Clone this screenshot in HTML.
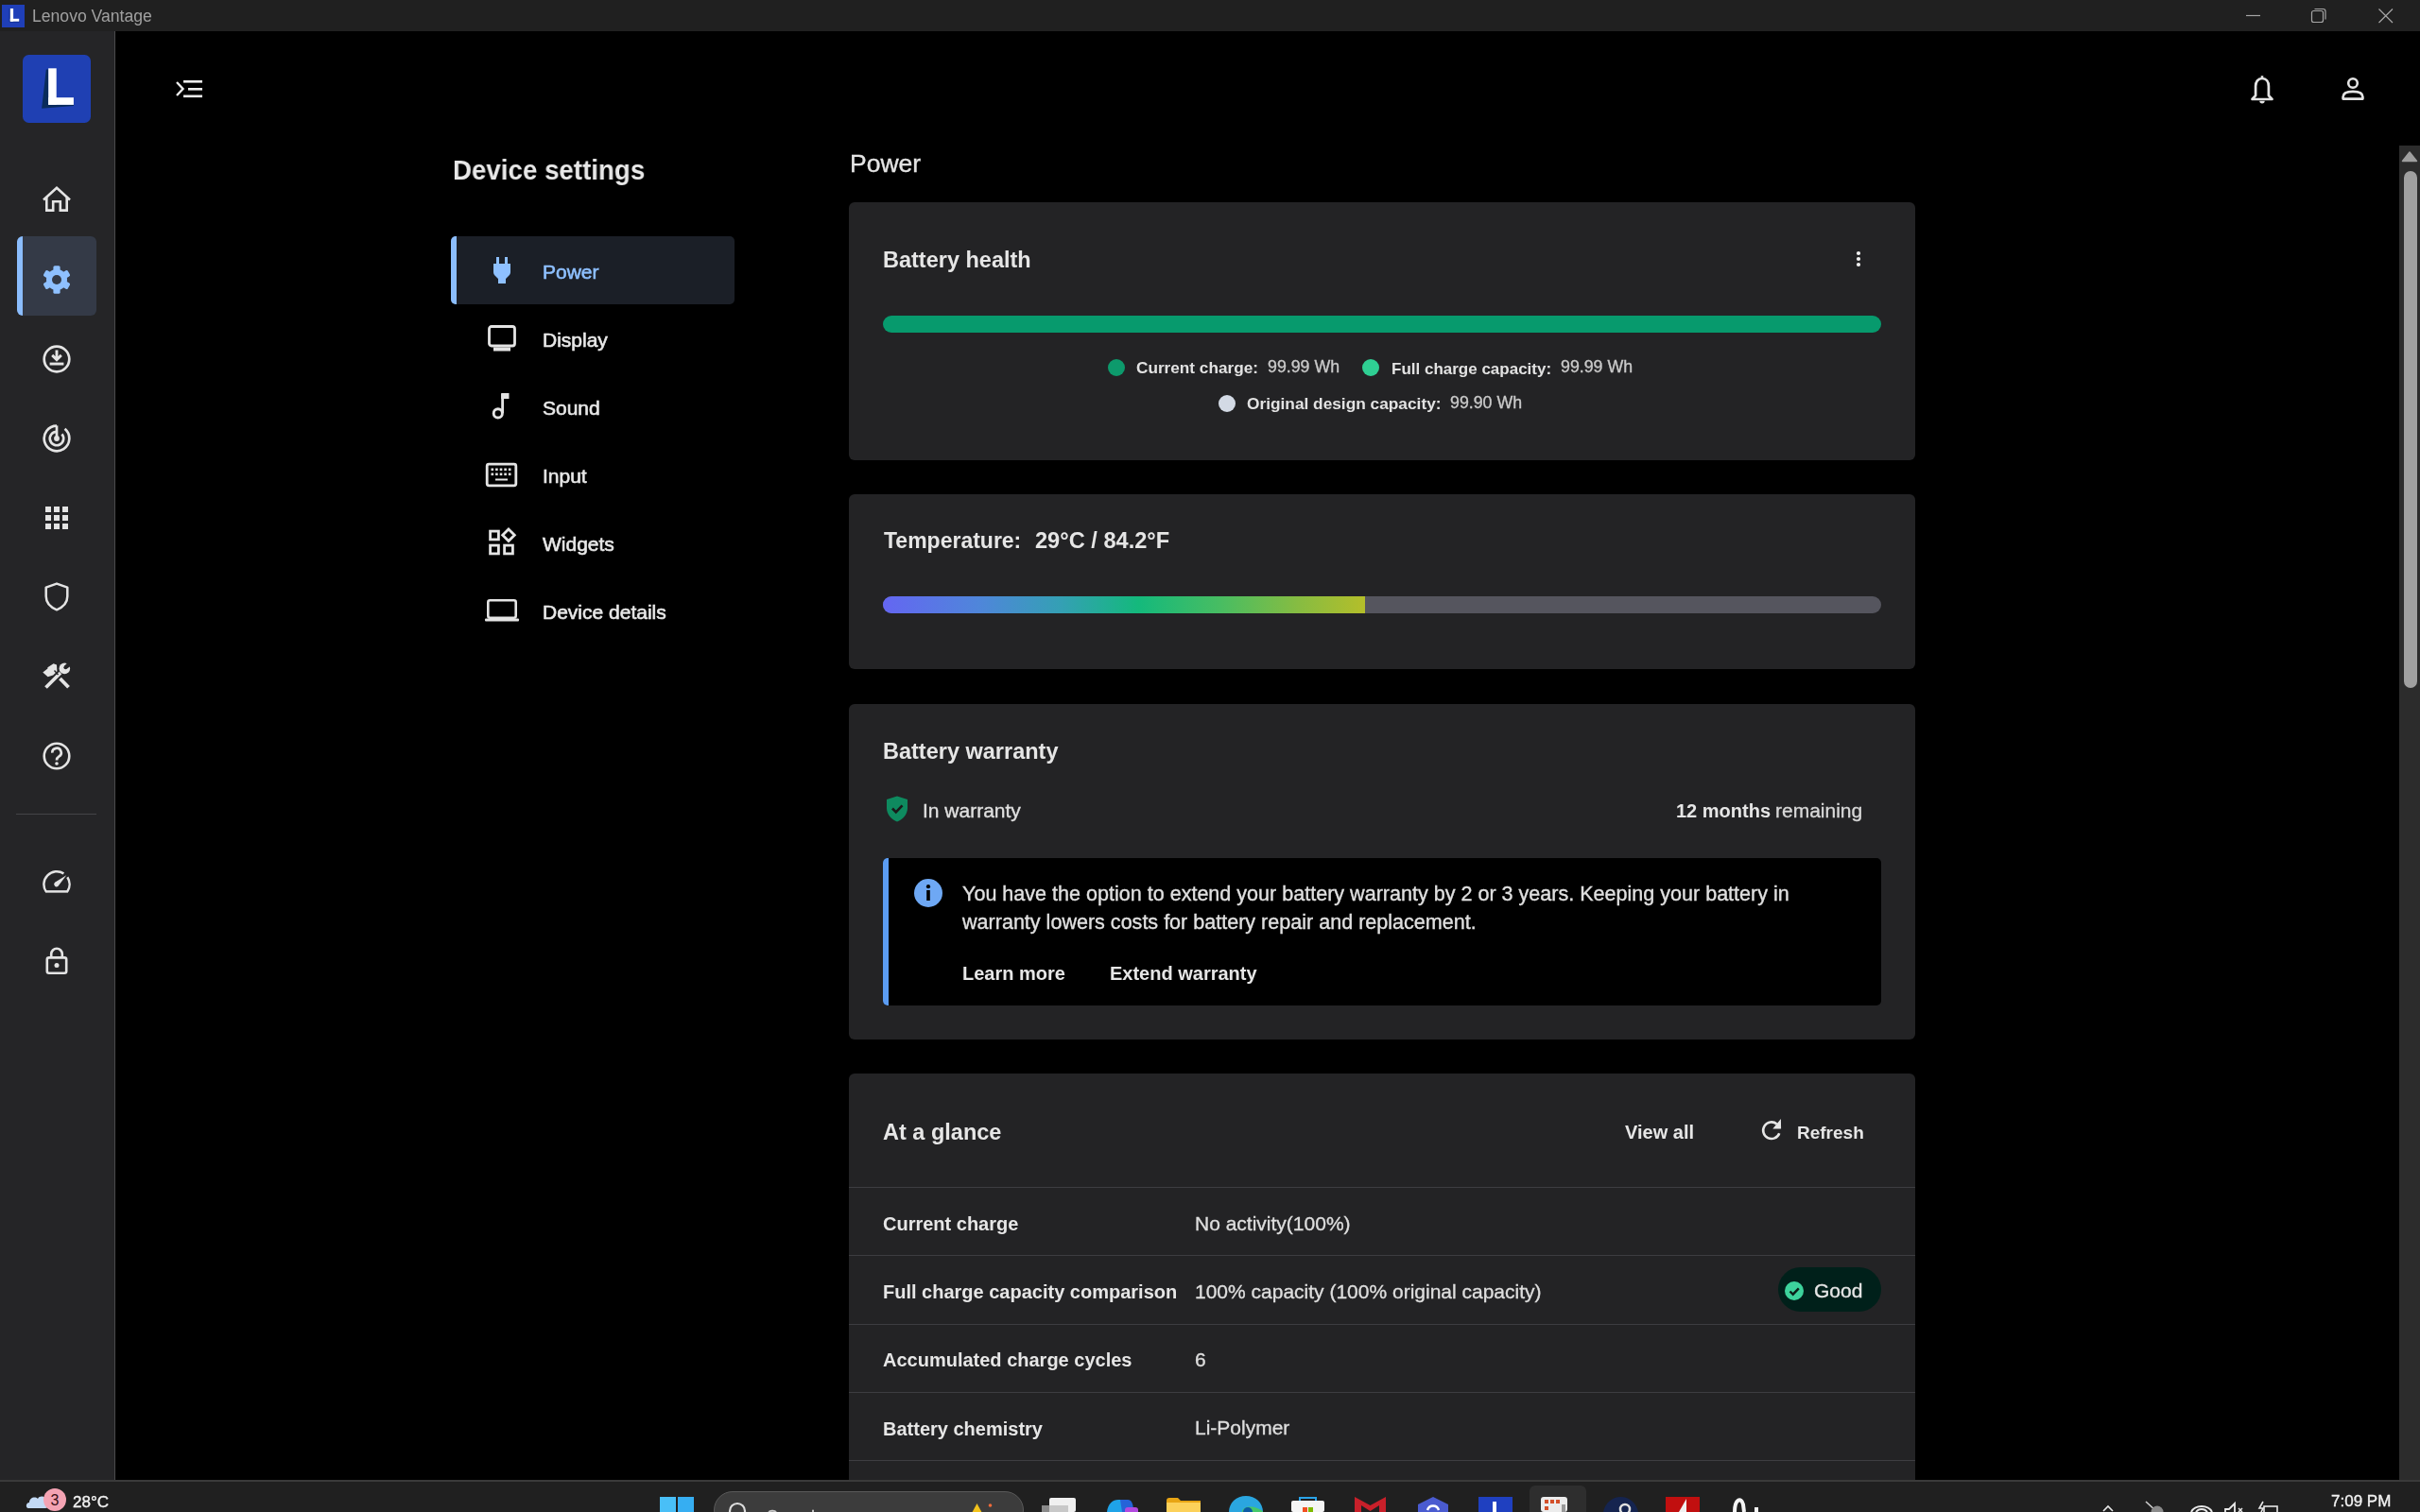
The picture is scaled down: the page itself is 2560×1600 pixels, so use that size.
<!DOCTYPE html>
<html><head><meta charset="utf-8"><style>
html,body{margin:0;padding:0;width:2560px;height:1600px;overflow:hidden;background:#000}
body{position:relative;font-family:"Liberation Sans", sans-serif}
.t{position:absolute;white-space:nowrap;will-change:transform}
svg{display:block}
</style></head><body>
<div style="position:absolute;left:0px;top:0px;width:2560px;height:33px;background:#202020"></div>
<div style="position:absolute;left:0px;top:33px;width:121px;height:1533px;background:#252527"></div>
<div style="position:absolute;left:121px;top:33px;width:1px;height:1533px;background:#4a4a4c"></div>
<div style="position:absolute;left:122px;top:33px;width:2416px;height:1533px;background:#000"></div>
<svg style="position:absolute;left:2px;top:5px" width="24" height="24" viewBox="0 0 24 24"><rect width="24" height="24.3" fill="#1f3fb8"/><path d="M8.2 4 V18 H18.8" fill="none" stroke="#001a60" stroke-width="1" opacity="0.6"/><rect x="8.8" y="4" width="3.3" height="13.7" fill="#fff"/><rect x="8.8" y="14.8" width="9.4" height="2.9" fill="#fff"/></svg>
<div class="t" style="left:34px;top:9.20px;font-size:17.6px;line-height:17.6px;font-weight:400;color:#a0a0a0;-webkit-text-stroke:0.35px #a0a0a0;-webkit-text-stroke-width:0;">Lenovo Vantage</div>
<svg style="position:absolute;left:2370px;top:8px" width="170" height="18" viewBox="0 0 170 18"><line x1="6" y1="8.5" x2="21" y2="8.5" stroke="#a6a6a6" stroke-width="1.2"/><rect x="75.5" y="3.5" width="12" height="12" rx="2" fill="none" stroke="#a6a6a6" stroke-width="1.2"/><path d="M78.5 1.5 H87.5 a2.5 2.5 0 0 1 2.5 2.5 V12.5" fill="none" stroke="#a6a6a6" stroke-width="1.2"/><path d="M146.5 1.5 L161 16 M161 1.5 L146.5 16" stroke="#a6a6a6" stroke-width="1.2"/></svg>
<svg style="position:absolute;left:24px;top:58px" width="72" height="72" viewBox="0 0 72 72"><rect width="72" height="72" rx="6.5" fill="#1f40b3"/><path d="M24.8 15.6 L27.2 15.6 L27.2 52.9 L54 52.9 L54 54 L20.1 56.8 Z" fill="#0a2c5c"/><rect x="27.2" y="14.3" width="8.5" height="38.6" fill="#fff"/><rect x="27.2" y="45.2" width="26.7" height="7.7" fill="#fff"/></svg>
<svg style="position:absolute;left:184px;top:83px" width="34" height="24" viewBox="0 0 34 24"><path d="M3 4 L9.5 11 L3 18" fill="none" stroke="#eee" stroke-width="2.4"/><rect x="10" y="2" width="20" height="2.6" fill="#eee"/><rect x="15" y="10" width="15" height="2.6" fill="#eee"/><rect x="10" y="17.5" width="20" height="2.6" fill="#eee"/></svg>
<svg style="position:absolute;left:2379px;top:78px" width="28" height="34" viewBox="0 0 28 34"><path d="M14 5 c-4.4 0 -6.9 3.4 -6.9 8.3 v9.8 l-3.6 3.9 h21 l-3.6 -3.9 v-9.8 c0 -4.9 -2.5 -8.3 -6.9 -8.3z" fill="none" stroke="#e4e4e4" stroke-width="2.7" stroke-linejoin="round"/><path d="M14 2.2 v3" stroke="#e4e4e4" stroke-width="2.6"/><path d="M11.3 28.8 a2.7 2.7 0 0 0 5.4 0z" fill="#e4e4e4"/></svg>
<svg style="position:absolute;left:2475px;top:80px" width="28" height="28" viewBox="0 0 28 28"><circle cx="14" cy="8" r="4.8" fill="none" stroke="#e4e4e4" stroke-width="2.6"/><path d="M3.6 24.6 v-2.2 c0 -3.5 4 -5.6 10.4 -5.6 s10.4 2.1 10.4 5.6 v2.2 z" fill="none" stroke="#e4e4e4" stroke-width="2.7" stroke-linejoin="round"/></svg>
<div style="position:absolute;left:2538px;top:154px;width:22px;height:1412px;background:#2c2c2c"></div>
<svg style="position:absolute;left:2538px;top:154px" width="22" height="22" viewBox="0 0 22 22"><path d="M11 7 L18.5 16.5 H3.5 Z" fill="#9f9f9f" stroke="#9f9f9f" stroke-width="1.5" stroke-linejoin="round"/></svg>
<div style="position:absolute;left:2543px;top:181px;width:14px;height:547px;background:#a0a0a0;border-radius:7px"></div>
<svg style="position:absolute;left:44px;top:196px" width="32" height="30" viewBox="0 0 32 30"><path d="M2 15.5 L16 2.8 L30 15.5" fill="none" stroke="#e4e4e4" stroke-width="2.6"/><path d="M5.3 12.8 V26.6 H12.2 V17.3 H19.8 V26.6 H26.7 V12.8" fill="none" stroke="#e4e4e4" stroke-width="2.6" stroke-linejoin="miter"/></svg>
<div style="position:absolute;left:18px;top:250px;width:84px;height:84px;background:#343a47;border-radius:6px"></div>
<div style="position:absolute;left:18px;top:250px;width:6px;height:84px;background:#8bbdfd;border-radius:6px 0 0 6px"></div>
<svg style="position:absolute;left:45px;top:281px" width="30" height="30" viewBox="0 0 30 30"><g transform="translate(15,15)" fill="#8ec0ff"><rect x="-3.6" y="-14.8" width="7.2" height="8" rx="1.6" transform="rotate(0)"/><rect x="-3.6" y="-14.8" width="7.2" height="8" rx="1.6" transform="rotate(60)"/><rect x="-3.6" y="-14.8" width="7.2" height="8" rx="1.6" transform="rotate(120)"/><rect x="-3.6" y="-14.8" width="7.2" height="8" rx="1.6" transform="rotate(180)"/><rect x="-3.6" y="-14.8" width="7.2" height="8" rx="1.6" transform="rotate(240)"/><rect x="-3.6" y="-14.8" width="7.2" height="8" rx="1.6" transform="rotate(300)"/><circle r="11"/><circle r="5" fill="#343a47"/></g></svg>
<svg style="position:absolute;left:45px;top:365px" width="30" height="30" viewBox="0 0 30 30"><circle cx="15" cy="15" r="13.3" fill="none" stroke="#e4e4e4" stroke-width="2.7"/><path d="M15 5.5 V15.5 M10.2 10.9 L15 15.7 L19.8 10.9" fill="none" stroke="#e4e4e4" stroke-width="2.9"/><rect x="7.6" y="18.6" width="14.8" height="2.9" fill="#e4e4e4"/></svg>
<svg style="position:absolute;left:45px;top:449px" width="30" height="30" viewBox="0 0 30 30"><path d="M15 1.7 A13.3 13.3 0 1 0 23.55 4.81" fill="none" stroke="#e4e4e4" stroke-width="2.7"/><path d="M15 7.8 A7.2 7.2 0 1 0 20.5 10.37" fill="none" stroke="#e4e4e4" stroke-width="2.7"/><path d="M15 1.4 V14" stroke="#e4e4e4" stroke-width="2.7"/><circle cx="15" cy="15" r="2.9" fill="#e4e4e4"/></svg>
<svg style="position:absolute;left:48px;top:536px" width="24" height="24" viewBox="0 0 24 24"><rect x="0" y="0" width="6" height="6" fill="#e4e4e4"/><rect x="9" y="0" width="6" height="6" fill="#e4e4e4"/><rect x="18" y="0" width="6" height="6" fill="#e4e4e4"/><rect x="0" y="9" width="6" height="6" fill="#e4e4e4"/><rect x="9" y="9" width="6" height="6" fill="#e4e4e4"/><rect x="18" y="9" width="6" height="6" fill="#e4e4e4"/><rect x="0" y="18" width="6" height="6" fill="#e4e4e4"/><rect x="9" y="18" width="6" height="6" fill="#e4e4e4"/><rect x="18" y="18" width="6" height="6" fill="#e4e4e4"/></svg>
<svg style="position:absolute;left:45px;top:616px" width="30" height="31" viewBox="0 0 30 31"><path d="M15 1.6 L26.3 5.6 V15 C26.3 22 21 26.8 15 29.3 C9 26.8 3.7 22 3.7 15 V5.6 Z" fill="none" stroke="#e4e4e4" stroke-width="2.5" stroke-linejoin="round"/></svg>
<svg style="position:absolute;left:40px;top:695px" width="40" height="40" viewBox="0 0 40 40"><path d="M8.5 32.5 L24 17" stroke="#e4e4e4" stroke-width="3.8"/><path d="M23.5 23 L32.5 32.3" stroke="#e4e4e4" stroke-width="3.8"/><circle cx="28.3" cy="12.4" r="5.8" fill="#e4e4e4"/><circle cx="29.4" cy="11.2" r="2" fill="#252527"/><path d="M28 9.8 L32 5.8 L35.5 9.3 L31 12.6 Z" fill="#252527"/><path d="M5.3 16.6 L10.4 12.6 L10.4 11.2 L16.6 7.2 L20 8.6 L20.4 15.4 L16.2 19.6 L10.6 21.2 Z" fill="#e4e4e4"/><path d="M17.5 14.5 L21.5 19" stroke="#252527" stroke-width="1.4"/></svg>
<svg style="position:absolute;left:45px;top:785px" width="30" height="30" viewBox="0 0 30 30"><circle cx="15" cy="15" r="13.3" fill="none" stroke="#e4e4e4" stroke-width="2.6"/><path d="M10.3 11.6 A4.7 4.7 0 1 1 17.2 15.6 C15.6 16.6 15 17.2 15 19.4" fill="none" stroke="#e4e4e4" stroke-width="2.7"/><circle cx="15" cy="23" r="1.8" fill="#e4e4e4"/></svg>
<div style="position:absolute;left:17px;top:861px;width:85px;height:1px;background:#444448"></div>
<svg style="position:absolute;left:45px;top:919px" width="30" height="28" viewBox="0 0 30 28"><path d="M3.72 24.4 A13.6 13.6 0 0 1 22.4 5.4 M26.3 9.25 A13.6 13.6 0 0 1 26.28 24.4" fill="none" stroke="#e4e4e4" stroke-width="2.5"/><path d="M3 24.4 H27" stroke="#e4e4e4" stroke-width="2.5"/><path d="M16.49 18.63 L25.2 7.3 L13.01 14.77 A2.6 2.6 0 0 0 16.49 18.63 Z" fill="#e4e4e4"/></svg>
<svg style="position:absolute;left:45px;top:1000px" width="30" height="32" viewBox="0 0 30 32"><path d="M9.2 13.5 V9.6 A5.8 5.8 0 0 1 20.8 9.6 V13.5" fill="none" stroke="#e4e4e4" stroke-width="2.6"/><rect x="4.8" y="13.4" width="20.4" height="16.4" rx="2" fill="none" stroke="#e4e4e4" stroke-width="2.6"/><circle cx="15" cy="21.6" r="2.5" fill="#e4e4e4"/></svg>
<div class="t" style="left:478.5px;top:164.95px;font-size:29.6px;line-height:29.6px;font-weight:700;color:#e8e8e8;transform:scaleX(0.936);transform-origin:0 0;">Device settings</div>
<div style="position:absolute;left:477px;top:250px;width:300px;height:71.5px;background:#1b1f27;border-radius:5px"></div>
<div style="position:absolute;left:477px;top:250px;width:6px;height:71.5px;background:#8bbdfd;border-radius:5px 0 0 5px"></div>
<div class="t" style="left:574px;top:276.63px;font-size:21px;line-height:21px;font-weight:400;color:#8ec0ff;-webkit-text-stroke:0.35px #8ec0ff;-webkit-text-stroke-width:0.6px;">Power</div>
<div class="t" style="left:574px;top:348.63px;font-size:21px;line-height:21px;font-weight:400;color:#e8e8e8;-webkit-text-stroke:0.35px #e8e8e8;-webkit-text-stroke-width:0.6px;">Display</div>
<div class="t" style="left:574px;top:420.63px;font-size:21px;line-height:21px;font-weight:400;color:#e8e8e8;-webkit-text-stroke:0.35px #e8e8e8;-webkit-text-stroke-width:0.6px;">Sound</div>
<div class="t" style="left:574px;top:492.63px;font-size:21px;line-height:21px;font-weight:400;color:#e8e8e8;-webkit-text-stroke:0.35px #e8e8e8;-webkit-text-stroke-width:0.6px;">Input</div>
<div class="t" style="left:574px;top:564.63px;font-size:21px;line-height:21px;font-weight:400;color:#e8e8e8;-webkit-text-stroke:0.35px #e8e8e8;-webkit-text-stroke-width:0.6px;">Widgets</div>
<div class="t" style="left:574px;top:636.63px;font-size:21px;line-height:21px;font-weight:400;color:#e8e8e8;-webkit-text-stroke:0.35px #e8e8e8;-webkit-text-stroke-width:0.6px;">Device details</div>
<svg style="position:absolute;left:520px;top:270px" width="22" height="32" viewBox="0 0 22 32"><rect x="5" y="2" width="3" height="8" fill="#8ec0ff"/><rect x="14" y="2" width="3" height="8" fill="#8ec0ff"/><path d="M2 9 H20 V18 C20 20 19 21 17.5 22.5 L15 25 V30 H7 V25 L4.5 22.5 C3 21 2 20 2 18 Z" fill="#8ec0ff"/></svg>
<svg style="position:absolute;left:515px;top:343px" width="32" height="30" viewBox="0 0 32 30"><rect x="2.5" y="2.5" width="27" height="20.5" rx="2.5" fill="none" stroke="#e4e4e4" stroke-width="2.8"/><rect x="7" y="24.5" width="18" height="4" fill="#e4e4e4"/></svg>
<svg style="position:absolute;left:520px;top:414px" width="22" height="32" viewBox="0 0 22 32"><circle cx="6.8" cy="23.4" r="4.6" fill="none" stroke="#e4e4e4" stroke-width="2.9"/><path d="M11.6 23 V3" stroke="#e4e4e4" stroke-width="2.8"/><rect x="10.2" y="2" width="8.3" height="6" fill="#e4e4e4"/></svg>
<svg style="position:absolute;left:513px;top:489px" width="35" height="27" viewBox="0 0 35 27"><rect x="2.2" y="2.2" width="30.6" height="22.6" rx="2" fill="none" stroke="#e4e4e4" stroke-width="2.8"/><rect x="6.5" y="6.5" width="2.6" height="2.6" fill="#e4e4e4"/><rect x="6.5" y="11.5" width="2.6" height="2.6" fill="#e4e4e4"/><rect x="11.1" y="6.5" width="2.6" height="2.6" fill="#e4e4e4"/><rect x="11.1" y="11.5" width="2.6" height="2.6" fill="#e4e4e4"/><rect x="15.7" y="6.5" width="2.6" height="2.6" fill="#e4e4e4"/><rect x="15.7" y="11.5" width="2.6" height="2.6" fill="#e4e4e4"/><rect x="20.3" y="6.5" width="2.6" height="2.6" fill="#e4e4e4"/><rect x="20.3" y="11.5" width="2.6" height="2.6" fill="#e4e4e4"/><rect x="24.9" y="6.5" width="2.6" height="2.6" fill="#e4e4e4"/><rect x="24.9" y="11.5" width="2.6" height="2.6" fill="#e4e4e4"/><rect x="11" y="17.5" width="13" height="2" fill="#e4e4e4"/></svg>
<svg style="position:absolute;left:516px;top:558px" width="32" height="31" viewBox="0 0 32 31"><rect x="2.6" y="4.1" width="8.8" height="8.8" fill="none" stroke="#e4e4e4" stroke-width="2.8"/><rect x="2.6" y="19.1" width="8.8" height="8.8" fill="none" stroke="#e4e4e4" stroke-width="2.8"/><rect x="17.6" y="19.1" width="8.8" height="8.8" fill="none" stroke="#e4e4e4" stroke-width="2.8"/><path d="M22 2 L28.3 8.3 L22 14.6 L15.7 8.3 Z" fill="none" stroke="#e4e4e4" stroke-width="2.8" stroke-linejoin="miter"/></svg>
<svg style="position:absolute;left:512px;top:633px" width="38" height="26" viewBox="0 0 38 26"><rect x="4.3" y="2.3" width="29.4" height="18.5" rx="2" fill="none" stroke="#e4e4e4" stroke-width="2.6"/><rect x="1" y="21.5" width="36" height="3" rx="1" fill="#e4e4e4"/></svg>
<div class="t" style="left:898.6px;top:159.97px;font-size:26.5px;line-height:26.5px;font-weight:400;color:#e4e4e4;-webkit-text-stroke:0.35px #e4e4e4;">Power</div>
<div style="position:absolute;left:898px;top:214px;width:1128px;height:273px;background:#232325;border-radius:6px"></div>
<div class="t" style="left:934px;top:264.11px;font-size:23.5px;line-height:23.5px;font-weight:700;color:#e6e6e6;">Battery health</div>
<svg style="position:absolute;left:1962px;top:264px" width="8" height="20" viewBox="0 0 8 20"><circle cx="4" cy="4" r="2.1" fill="#f0f0f0"/><circle cx="4" cy="10" r="2.1" fill="#f0f0f0"/><circle cx="4" cy="16" r="2.1" fill="#f0f0f0"/></svg>
<div style="position:absolute;left:934px;top:334px;width:1056px;height:18px;background:#079a6d;border-radius:9px"></div>
<div style="position:absolute;left:1172px;top:380px;width:18px;height:18px;background:#0d9a6c;border-radius:50%"></div>
<div style="position:absolute;left:1441px;top:380px;width:18px;height:18px;background:#2fcf93;border-radius:50%"></div>
<div style="position:absolute;left:1289px;top:418px;width:18px;height:18px;background:#d3dae5;border-radius:50%"></div>
<div class="t" style="left:1202px;top:381.44px;font-size:17.2px;line-height:17.2px;font-weight:700;color:#e2e2e2;">Current charge:</div>
<div class="t" style="left:1340.5px;top:380.33px;font-size:17.8px;line-height:17.8px;font-weight:400;color:#c9c9c9;-webkit-text-stroke:0.35px #c9c9c9;">99.99 Wh</div>
<div class="t" style="left:1472px;top:381.61px;font-size:17.0px;line-height:17.0px;font-weight:700;color:#e2e2e2;">Full charge capacity:</div>
<div class="t" style="left:1651px;top:380.33px;font-size:17.8px;line-height:17.8px;font-weight:400;color:#c9c9c9;-webkit-text-stroke:0.35px #c9c9c9;">99.99 Wh</div>
<div class="t" style="left:1318.7px;top:419.36px;font-size:17.3px;line-height:17.3px;font-weight:700;color:#e2e2e2;">Original design capacity:</div>
<div class="t" style="left:1534px;top:418.33px;font-size:17.8px;line-height:17.8px;font-weight:400;color:#c9c9c9;-webkit-text-stroke:0.35px #c9c9c9;">99.90 Wh</div>
<div style="position:absolute;left:898px;top:523px;width:1128px;height:185px;background:#232325;border-radius:6px"></div>
<div class="t" style="left:934.5px;top:561.03px;font-size:23px;line-height:23px;font-weight:700;color:#e6e6e6;">Temperature:</div>
<div class="t" style="left:1094.5px;top:560.52px;font-size:23.6px;line-height:23.6px;font-weight:700;color:#e6e6e6;">29°C / 84.2°F</div>
<div style="position:absolute;left:934px;top:631px;width:1056px;height:18px;background:#55555e;border-radius:9px"></div>
<div style="position:absolute;left:934px;top:631px;width:510px;height:18px;background:linear-gradient(90deg,#6466f2 0%,#4f86da 20%,#34a0b4 37%,#14b97c 53%,#48bd62 70%,#86bc42 86%,#b4be2a 100%);border-radius:9px 0 0 9px"></div>
<div style="position:absolute;left:898px;top:745px;width:1128px;height:355px;background:#232325;border-radius:6px"></div>
<div class="t" style="left:934.3px;top:784.11px;font-size:23.5px;line-height:23.5px;font-weight:700;color:#e6e6e6;">Battery warranty</div>
<svg style="position:absolute;left:936px;top:841px" width="26" height="30" viewBox="0 0 26 30"><path d="M13 1.5 L24 5 V14 C24 21 19 26 13 28.5 C7 26 2 21 2 14 V5 Z" fill="#0e8a5f"/><path d="M8 14.5 L11.8 18.3 L18.5 11.3" fill="none" stroke="#1a1a1a" stroke-width="2.6"/></svg>
<div class="t" style="left:976px;top:846.63px;font-size:21px;line-height:21px;font-weight:400;color:#e0e0e0;-webkit-text-stroke:0.35px #e0e0e0;">In warranty</div>
<div class="t" style="left:1772.7px;top:848.07px;font-size:20px;line-height:20px;font-weight:700;color:#e6e6e6;">12 months</div>
<div class="t" style="left:1878px;top:846.63px;font-size:21px;line-height:21px;font-weight:400;color:#d8d8d8;-webkit-text-stroke:0.35px #d8d8d8;">remaining</div>
<div style="position:absolute;left:934px;top:908px;width:1056px;height:156px;background:#000;border-radius:5px"></div>
<div style="position:absolute;left:934px;top:908px;width:6px;height:156px;background:#5b9cf2;border-radius:5px 0 0 5px"></div>
<svg style="position:absolute;left:967px;top:930px" width="30" height="30" viewBox="0 0 30 30"><circle cx="15" cy="15" r="15" fill="#6ea8f4"/><rect x="13.2" y="12" width="3.6" height="11" fill="#000"/><circle cx="15" cy="8.2" r="2.1" fill="#000"/></svg>
<div class="t" style="left:1018.3px;top:934.56px;font-size:21.55px;line-height:21.55px;font-weight:400;color:#e0e0e0;-webkit-text-stroke:0.35px #e0e0e0;">You have the option to extend your battery warranty by 2 or 3 years. Keeping your battery in</div>
<div class="t" style="left:1018.3px;top:964.66px;font-size:21.55px;line-height:21.55px;font-weight:400;color:#e0e0e0;-webkit-text-stroke:0.35px #e0e0e0;">warranty lowers costs for battery repair and replacement.</div>
<div class="t" style="left:1018.3px;top:1020.47px;font-size:20px;line-height:20px;font-weight:700;color:#e6e6e6;">Learn more</div>
<div class="t" style="left:1174px;top:1020.47px;font-size:20px;line-height:20px;font-weight:700;color:#e6e6e6;">Extend warranty</div>
<div style="position:absolute;left:898px;top:1136px;width:1128px;height:500px;background:#232325;border-radius:6px 6px 0 0"></div>
<div class="t" style="left:934px;top:1187.41px;font-size:23.5px;line-height:23.5px;font-weight:700;color:#e6e6e6;">At a glance</div>
<div class="t" style="left:1719.4px;top:1188.07px;font-size:20px;line-height:20px;font-weight:700;color:#e6e6e6;">View all</div>
<svg style="position:absolute;left:1862px;top:1182px" width="24" height="26" viewBox="0 0 24 26"><path d="M20.27 17.21 A8.8 8.8 0 1 1 17.66 7.46" fill="none" stroke="#e6e6e6" stroke-width="2.6"/><path d="M21.9 2 L22.1 12.6 L13.3 12.6 Z" fill="#e6e6e6"/></svg>
<div class="t" style="left:1901px;top:1188.92px;font-size:19px;line-height:19px;font-weight:700;color:#e6e6e6;">Refresh</div>
<div style="position:absolute;left:898px;top:1256px;width:1128px;height:1px;background:#3d3d41"></div>
<div style="position:absolute;left:898px;top:1328px;width:1128px;height:1px;background:#3d3d41"></div>
<div style="position:absolute;left:898px;top:1401px;width:1128px;height:1px;background:#3d3d41"></div>
<div style="position:absolute;left:898px;top:1473px;width:1128px;height:1px;background:#3d3d41"></div>
<div style="position:absolute;left:898px;top:1545px;width:1128px;height:1px;background:#3d3d41"></div>
<div class="t" style="left:934px;top:1285.07px;font-size:20px;line-height:20px;font-weight:700;color:#e6e6e6;">Current charge</div>
<div class="t" style="left:1264px;top:1283.63px;font-size:21px;line-height:21px;font-weight:400;color:#dedede;-webkit-text-stroke:0.35px #dedede;">No activity(100%)</div>
<div class="t" style="left:934px;top:1357.07px;font-size:20px;line-height:20px;font-weight:700;color:#e6e6e6;">Full charge capacity comparison</div>
<div class="t" style="left:1264px;top:1355.63px;font-size:21px;line-height:21px;font-weight:400;color:#dedede;-webkit-text-stroke:0.35px #dedede;">100% capacity (100% original capacity)</div>
<div class="t" style="left:934px;top:1429.07px;font-size:20px;line-height:20px;font-weight:700;color:#e6e6e6;">Accumulated charge cycles</div>
<div class="t" style="left:1264px;top:1427.63px;font-size:21px;line-height:21px;font-weight:400;color:#dedede;-webkit-text-stroke:0.35px #dedede;">6</div>
<div class="t" style="left:934px;top:1501.57px;font-size:20px;line-height:20px;font-weight:700;color:#e6e6e6;">Battery chemistry</div>
<div class="t" style="left:1264px;top:1500.13px;font-size:21px;line-height:21px;font-weight:400;color:#dedede;-webkit-text-stroke:0.35px #dedede;">Li-Polymer</div>
<div style="position:absolute;left:1880.5px;top:1341px;width:109.5px;height:47px;background:#00201a;border-radius:24px"></div>
<svg style="position:absolute;left:1888px;top:1355.5px" width="20" height="20" viewBox="0 0 20 20"><circle cx="10" cy="10" r="10" fill="#3dd39c"/><path d="M5.5 10.5 L8.7 13.7 L14.8 7.3" fill="none" stroke="#0b1f18" stroke-width="2.4"/></svg>
<div class="t" style="left:1918.5px;top:1354.83px;font-size:21px;line-height:21px;font-weight:400;color:#e6e6e6;-webkit-text-stroke:0.35px #e6e6e6;">Good</div>
<div style="position:absolute;left:0px;top:1566px;width:2560px;height:34px;background:#202020"></div>
<div style="position:absolute;left:0px;top:1566px;width:2560px;height:2px;background:#3a3a3a"></div>
<svg style="position:absolute;left:26px;top:1574px" width="50" height="26" viewBox="0 0 50 26"><path d="M4 22 C1 22 1 16 5 16 C5 11 11 9 14 12 C16 8 23 9 23 15 C26 15 26 22 22 22 Z" fill="#c3daf5"/><circle cx="32" cy="13" r="12" fill="#f4a3b3"/><text x="32" y="19" text-anchor="middle" font-family="Liberation Sans" font-size="16" fill="#3a1015">3</text></svg>
<div class="t" style="left:77px;top:1580.51px;font-size:17px;line-height:17px;font-weight:400;color:#f2f2f2;-webkit-text-stroke:0.35px #f2f2f2;">28°C</div>
<svg style="position:absolute;left:698px;top:1584px" width="36" height="16" viewBox="0 0 36 16"><rect x="0" y="0" width="17" height="17" fill="#49bff7"/><rect x="19" y="0" width="17" height="17" fill="#36aef2"/></svg>
<div style="position:absolute;left:754.5px;top:1578px;width:328px;height:40px;background:#3c3c3c;border:1.5px solid #5a5a5a;border-radius:22px;box-sizing:border-box"></div>
<svg style="position:absolute;left:770px;top:1589px" width="24" height="12" viewBox="0 0 24 12"><circle cx="10" cy="10" r="8" fill="none" stroke="#dcdcdc" stroke-width="2.2"/></svg>
<div class="t" style="left:811px;top:1596.16px;font-size:18px;line-height:18px;font-weight:400;color:#d0d0d0;-webkit-text-stroke:0.35px #d0d0d0;">Search</div>
<svg style="position:absolute;left:1024px;top:1588px" width="30" height="12" viewBox="0 0 30 12"><path d="M9.5 3 L15.5 14 H3.5 Z" fill="#f2c21b"/><circle cx="23.5" cy="5" r="1.8" fill="#f36b3a"/></svg>
<svg style="position:absolute;left:1102px;top:1585px" width="36" height="15" viewBox="0 0 36 15"><rect x="0" y="8" width="10" height="7" fill="#8a8a8a"/><rect x="8" y="0" width="28" height="15" rx="2" fill="#f0f0f0"/><rect x="8" y="8" width="20" height="7" fill="#c8c8c8"/></svg>
<svg style="position:absolute;left:1169px;top:1587px" width="35" height="13" viewBox="0 0 35 13"><path d="M2 13 C3 4 8 0 14 0 H22 L18 13 Z" fill="#1fa3e8"/><path d="M16 0 H24 C28 0 30 4 30 13 H18 Z" fill="#2563d8"/><rect x="21" y="8" width="14" height="8" rx="3" fill="#b34ae0"/></svg>
<svg style="position:absolute;left:1234px;top:1585px" width="36" height="15" viewBox="0 0 36 15"><path d="M0 3 C0 1 1 0 3 0 H12 L15 3 H36 V15 H0 Z" fill="#e8a514"/><rect x="0" y="5" width="36" height="10" fill="#fcd15a"/></svg>
<svg style="position:absolute;left:1300px;top:1583px" width="36" height="17" viewBox="0 0 36 17"><path d="M0 17 C0 7 8 0 18 0 C28 0 36 7 36 17 Z" fill="#2aa6e0"/><path d="M14 17 C14 12 22 10 30 13 C33 14 36 16 36 17 Z" fill="#45c86a"/><circle cx="20" cy="17" r="5" fill="#0c5aa6"/></svg>
<svg style="position:absolute;left:1366px;top:1583px" width="35" height="17" viewBox="0 0 35 17"><path d="M9 7 V2 H26 V7" fill="none" stroke="#2aa3e8" stroke-width="2"/><rect x="0" y="5" width="35" height="12" rx="2" fill="#f5f5f5"/><rect x="12" y="12" width="5" height="5" fill="#f25022"/><rect x="18" y="12" width="5" height="5" fill="#7fba00"/></svg>
<svg style="position:absolute;left:1433px;top:1584px" width="33" height="16" viewBox="0 0 33 16"><path d="M0 0 L16.5 9 L33 0 V16 H26 V9 L16.5 15 L7 9 V16 H0 Z" fill="#c8202a"/></svg>
<svg style="position:absolute;left:1500px;top:1584px" width="32" height="16" viewBox="0 0 32 16"><path d="M16 0 L32 8 V16 H0 V8 Z" fill="#4a5bd0"/><path d="M10 14 C12 8 20 8 22 14" fill="none" stroke="#fff" stroke-width="2.5"/></svg>
<svg style="position:absolute;left:1564px;top:1584px" width="36" height="16" viewBox="0 0 36 16"><rect width="36" height="16" fill="#1f40c0"/><rect x="15" y="5" width="4" height="11" fill="#fff"/></svg>
<div style="position:absolute;left:1618px;top:1572px;width:59.5px;height:40px;background:#2e2e2e;border-radius:6px"></div>
<svg style="position:absolute;left:1629.5px;top:1584px" width="28" height="16" viewBox="0 0 28 16"><rect width="28" height="16" rx="3" fill="#ececec"/><rect x="4" y="3" width="4" height="4" fill="#d4502a"/><rect x="10" y="3" width="4" height="4" fill="#d4502a"/><rect x="16" y="3" width="4" height="4" fill="#d4502a"/><rect x="4" y="10" width="4" height="4" fill="#d4502a"/><rect x="22" y="8" width="4" height="8" fill="#9a9a9a"/></svg>
<svg style="position:absolute;left:1696px;top:1584px" width="37" height="16" viewBox="0 0 37 16"><path d="M0 16 C2 6 10 0 18.5 0 C27 0 35 6 37 16 Z" fill="#15244f"/><circle cx="23" cy="13" r="5" fill="none" stroke="#e0e0e0" stroke-width="2.5"/></svg>
<svg style="position:absolute;left:1762px;top:1584px" width="36" height="16" viewBox="0 0 36 16"><rect width="36" height="16" fill="#c10f0f"/><path d="M22 2 L14 16 H22 Z" fill="#f0f0f0"/></svg>
<svg style="position:absolute;left:1830px;top:1584px" width="32" height="16" viewBox="0 0 32 16"><path d="M5 16 C5 2 12 0 14 8 L15 16" fill="none" stroke="#f5f5f5" stroke-width="4"/><rect x="26" y="11" width="4" height="5" fill="#f5f5f5"/></svg>
<svg style="position:absolute;left:2222px;top:1588px" width="200" height="12" viewBox="0 0 200 12"><path d="M3 11 L8 6 L13 11" fill="none" stroke="#e8e8e8" stroke-width="1.6"/><path d="M48 1 L60 12" stroke="#cfcfcf" stroke-width="1.6"/><circle cx="60" cy="12" r="6.5" fill="#8a8a8a"/><path d="M96 12 C100 4 114 4 118 12" fill="none" stroke="#e8e8e8" stroke-width="2"/><path d="M101 12 C104 8 110 8 113 12" fill="none" stroke="#e8e8e8" stroke-width="2"/><path d="M132 12 V9 H136 L142 3 V12" fill="none" stroke="#e8e8e8" stroke-width="1.8"/><path d="M146 8 L150 12 M150 8 L146 12" stroke="#e8e8e8" stroke-width="1.5"/><path d="M172 1 L168 8 H172 L170 12" fill="none" stroke="#e8e8e8" stroke-width="1.6"/><rect x="173" y="6" width="14" height="8" fill="none" stroke="#e8e8e8" stroke-width="1.6"/></svg>
<div class="t" style="left:2466px;top:1580.21px;font-size:17px;line-height:17px;font-weight:400;color:#f2f2f2;-webkit-text-stroke:0.35px #f2f2f2;">7:09 PM</div>
</body></html>
